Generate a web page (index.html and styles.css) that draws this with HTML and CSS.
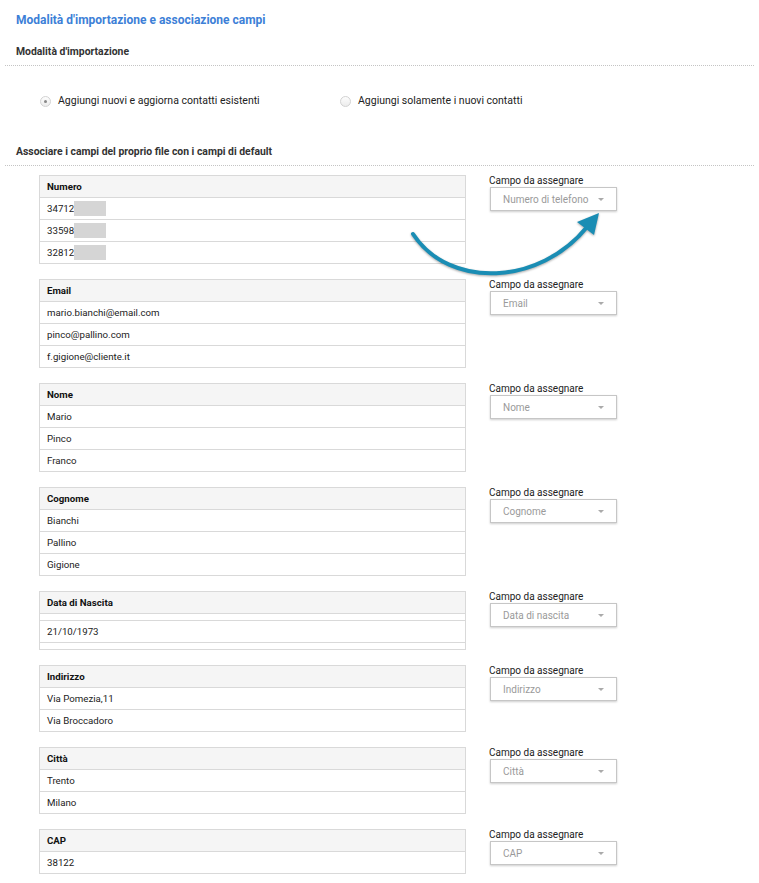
FILE: index.html
```html
<!DOCTYPE html>
<html lang="it">
<head>
    <meta charset="UTF-8">
    <meta name="viewport" content="width=device-width, initial-scale=1.0">
    <title>Importazione contatti</title>
    <link rel="stylesheet" href="styles.css">
</head>
<body>
    <div class="page">
        <h2 class="title">Modalità d'importazione e associazione campi</h2>

        <div class="section-head">Modalità d'importazione</div>
        <div class="radios">
            <label class="radio"><span class="dot checked"></span>Aggiungi nuovi e aggiorna contatti esistenti</label>
            <label class="radio"><span class="dot"></span>Aggiungi solamente i nuovi contatti</label>
        </div>

        <div class="section-head">Associare i campi del proprio file con i campi di default</div>

        <div class="fields">
            <div class="field-row">
                <table class="data">
                    <tr><th>Numero</th></tr>
                    <tr><td>34712<span class="hidden-part"></span></td></tr>
                    <tr><td>33598<span class="hidden-part"></span></td></tr>
                    <tr><td>32812<span class="hidden-part"></span></td></tr>
                </table>
                <div class="assign">
                    <div class="assign-label">Campo da assegnare</div>
                    <div class="select"><span>Numero di telefono</span><span class="caret"></span></div>
                </div>
            </div>

            <div class="field-row">
                <table class="data">
                    <tr><th>Email</th></tr>
                    <tr><td>mario.bianchi@email.com</td></tr>
                    <tr><td>pinco@pallino.com</td></tr>
                    <tr><td>f.gigione@cliente.it</td></tr>
                </table>
                <div class="assign">
                    <div class="assign-label">Campo da assegnare</div>
                    <div class="select"><span>Email</span><span class="caret"></span></div>
                </div>
            </div>

            <div class="field-row">
                <table class="data">
                    <tr><th>Nome</th></tr>
                    <tr><td>Mario</td></tr>
                    <tr><td>Pinco</td></tr>
                    <tr><td>Franco</td></tr>
                </table>
                <div class="assign">
                    <div class="assign-label">Campo da assegnare</div>
                    <div class="select"><span>Nome</span><span class="caret"></span></div>
                </div>
            </div>

            <div class="field-row">
                <table class="data">
                    <tr><th>Cognome</th></tr>
                    <tr><td>Bianchi</td></tr>
                    <tr><td>Pallino</td></tr>
                    <tr><td>Gigione</td></tr>
                </table>
                <div class="assign">
                    <div class="assign-label">Campo da assegnare</div>
                    <div class="select"><span>Cognome</span><span class="caret"></span></div>
                </div>
            </div>

            <div class="field-row">
                <table class="data">
                    <tr><th>Data di Nascita</th></tr>
                    <tr><td class="empty"></td></tr>
                    <tr><td>21/10/1973</td></tr>
                    <tr><td class="empty"></td></tr>
                </table>
                <div class="assign">
                    <div class="assign-label">Campo da assegnare</div>
                    <div class="select"><span>Data di nascita</span><span class="caret"></span></div>
                </div>
            </div>

            <div class="field-row">
                <table class="data">
                    <tr><th>Indirizzo</th></tr>
                    <tr><td>Via Pomezia,11</td></tr>
                    <tr><td>Via Broccadoro</td></tr>
                </table>
                <div class="assign">
                    <div class="assign-label">Campo da assegnare</div>
                    <div class="select"><span>Indirizzo</span><span class="caret"></span></div>
                </div>
            </div>

            <div class="field-row">
                <table class="data">
                    <tr><th>Città</th></tr>
                    <tr><td>Trento</td></tr>
                    <tr><td>Milano</td></tr>
                </table>
                <div class="assign">
                    <div class="assign-label">Campo da assegnare</div>
                    <div class="select"><span>Città</span><span class="caret"></span></div>
                </div>
            </div>

            <div class="field-row">
                <table class="data">
                    <tr><th>CAP</th></tr>
                    <tr><td>38122</td></tr>
                </table>
                <div class="assign">
                    <div class="assign-label">Campo da assegnare</div>
                    <div class="select"><span>CAP</span><span class="caret"></span></div>
                </div>
            </div>
        </div>

        <!-- freccia che collega i dati al campo -->
        <svg class="arrow" width="759" height="300" viewBox="0 0 759 300">
            <path d="M413 234 C450 290 540 285 587 227" fill="none" stroke="#1a8db4" stroke-width="4" stroke-linecap="round"/>
            <polygon points="599,213 577,222 594,235" fill="#1a8db4"/>
        </svg>
    </div>
</body>
</html>
```

FILE: styles.css
```css
* {
    box-sizing: border-box;
}
body {
    margin: 0;
    background: #fff;
    font-family: Roboto, "Liberation Sans", Arial, sans-serif;
    color: #222;
}
.page {
    position: relative;
    width: 759px;
    height: 883px;
    overflow: hidden;
}
.title {
    margin: 0;
    padding: 13px 16px 0;
    font-size: 12px;
    line-height: 15px;
    font-weight: bold;
    color: #3d7fd7;
}
.section-head {
    margin: 15px 5px 0;
    padding: 2px 11px 6px;
    font-size: 10.4px;
    line-height: 14px;
    font-weight: bold;
    color: #333;
    border-bottom: 1px dotted #c4c4c4;
}
.radios {
    display: flex;
    padding: 28px 0 20px 40px;
    font-size: 10.5px;
    line-height: 14px;
}
.radio {
    display: flex;
    align-items: center;
    width: 300px;
}
.dot {
    width: 11px;
    height: 11px;
    margin-right: 7px;
    border: 1px solid #d2d2d2;
    border-radius: 50%;
    background: linear-gradient(#fdfdfd, #ececec);
    display: flex;
    align-items: center;
    justify-content: center;
}
.dot.checked::after {
    content: "";
    width: 3px;
    height: 3px;
    border-radius: 50%;
    background: #888;
}
.fields {
    padding: 9px 0 0 39px;
}
.field-row {
    display: flex;
    align-items: flex-start;
    margin-bottom: 15px;
}
.data {
    width: 427px;
    border-collapse: collapse;
    font-size: 9.7px;
    line-height: 15px;
}
.data th,
.data td {
    border: 1px solid #d9d9d9;
    padding: 3px 7px;
    text-align: left;
}
.data th {
    background: #f5f5f5;
    font-weight: bold;
    color: #111;
}
.data td.empty {
    padding: 0;
    height: 7px;
    line-height: 0;
}
.hidden-part {
    display: inline-block;
    width: 32px;
    height: 15px;
    vertical-align: top;
    background: #d5d5d5;
}
.assign {
    margin-left: 23px;
}
.assign-label {
    font-size: 10px;
    line-height: 12px;
    color: #222;
}
.select {
    display: flex;
    align-items: center;
    justify-content: space-between;
    width: 127px;
    height: 24px;
    margin-left: 1px;
    padding: 0 12px;
    border: 1px solid #c6c6c6;
    background: #fff;
    box-shadow: 0 1px 2px rgba(0, 0, 0, 0.2);
    font-size: 10px;
    color: #9a9a9a;
}
.caret {
    width: 0;
    height: 0;
    border-left: 3px solid transparent;
    border-right: 3px solid transparent;
    border-top: 3px solid #aaa;
}
.arrow {
    position: absolute;
    left: 0;
    top: 0;
    filter: drop-shadow(0 1px 1px rgba(0, 0, 0, 0.35));
}
```
